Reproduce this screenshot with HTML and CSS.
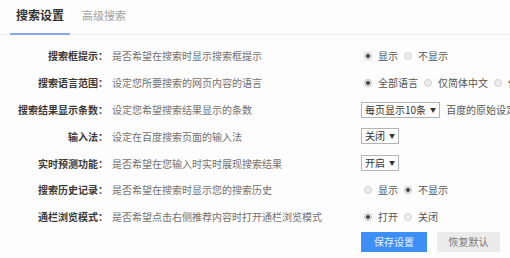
FILE: index.html
```html
<!DOCTYPE html>
<html lang="zh-CN">
<head>
<meta charset="utf-8">
<link rel="stylesheet" href="styles.css">
</head>
<body>
<div class="page">
  <div class="tabs">
    <div class="tab active">搜索设置</div>
    <div class="tab">高级搜索</div>
  </div>
  <div class="form">
    <div class="row">
      <div class="label">搜索框提示：</div>
      <div class="desc">是否希望在搜索时显示搜索框提示</div>
      <div class="ctrl">
        <span class="radio checked"></span><span class="opt">显示</span>
        <span class="radio"></span><span class="opt">不显示</span>
      </div>
    </div>
    <div class="row">
      <div class="label">搜索语言范围：</div>
      <div class="desc">设定您所要搜索的网页内容的语言</div>
      <div class="ctrl">
        <span class="radio checked"></span><span class="opt">全部语言</span>
        <span class="radio"></span><span class="opt">仅简体中文</span>
        <span class="radio"></span><span class="opt">仅繁体中文</span>
      </div>
    </div>
    <div class="row">
      <div class="label">搜索结果显示条数：</div>
      <div class="desc">设定您希望搜索结果显示的条数</div>
      <div class="ctrl">
        <span class="select">每页显示10条<span class="arrow">▼</span></span><span class="note">百度的原始设定10条且最有效率</span>
      </div>
    </div>
    <div class="row">
      <div class="label">输入法：</div>
      <div class="desc">设定在百度搜索页面的输入法</div>
      <div class="ctrl">
        <span class="select">关闭<span class="arrow">▼</span></span>
      </div>
    </div>
    <div class="row">
      <div class="label">实时预测功能：</div>
      <div class="desc">是否希望在您输入时实时展现搜索结果</div>
      <div class="ctrl">
        <span class="select">开启<span class="arrow">▼</span></span>
      </div>
    </div>
    <div class="row">
      <div class="label">搜索历史记录：</div>
      <div class="desc">是否希望在搜索时显示您的搜索历史</div>
      <div class="ctrl">
        <span class="radio"></span><span class="opt">显示</span>
        <span class="radio checked"></span><span class="opt">不显示</span>
      </div>
    </div>
    <div class="row">
      <div class="label">通栏浏览模式：</div>
      <div class="desc">是否希望点击右侧推荐内容时打开通栏浏览模式</div>
      <div class="ctrl">
        <span class="radio checked"></span><span class="opt">打开</span>
        <span class="radio"></span><span class="opt">关闭</span>
      </div>
    </div>
    <div class="buttons">
      <button class="btn primary">保存设置</button>
      <button class="btn">恢复默认</button>
    </div>
  </div>
</div>
</body>
</html>
```
FILE: styles.css
```css
html, body {
  margin: 0;
  padding: 0;
  background: #fdfdfd;
  overflow: hidden;
}
body {
  width: 510px;
  height: 258px;
  font-family: "Noto Sans CJK SC", "Liberation Sans", sans-serif;
  font-size: 10px;
  color: #333;
}
.page {
  width: 510px;
  overflow: hidden;
}
.tabs {
  display: flex;
  height: 35px;
  box-sizing: border-box;
  padding-left: 10px;
  border-bottom: 1px solid #eeeeee;
}
.tab {
  box-sizing: border-box;
  height: 35px;
  margin-bottom: -1px;
  padding: 0 6px;
  line-height: 30px;
  font-size: 11px;
  color: #a0a0a0;
  border-bottom: 2px solid transparent;
}
.tab + .tab {
  margin-left: 6px;
}
.tab.active {
  font-size: 12px;
  font-weight: bold;
  color: #333;
  border-bottom-color: #87a8e2;
}
.form {
  padding-top: 7.6px;
}
.row {
  display: flex;
  align-items: center;
  height: 26.8px;
  white-space: nowrap;
}
.label {
  width: 108px;
  flex: none;
  text-align: right;
  font-weight: bold;
  color: #3a3a3a;
}
.desc {
  width: 249px;
  flex: none;
  padding-left: 4px;
  color: #717171;
}
.ctrl {
  display: flex;
  align-items: center;
  flex: 1;
  min-width: 0;
  overflow: hidden;
  white-space: nowrap;
}
.radio {
  display: inline-block;
  flex: none;
  box-sizing: border-box;
  width: 8px;
  height: 8px;
  border-radius: 50%;
  border: 1px solid #d2d2d2;
  background: #ececec;
  margin: 0 6px 0 3px;
}
.radio.checked {
  border-color: #bdbdbd;
  background: radial-gradient(circle, #4a4a4a 0 1.6px, #e6e6e6 2.2px);
}
.opt {
  color: #555;
  margin-right: 3px;
}
.select {
  display: inline-flex;
  align-items: center;
  flex: none;
  box-sizing: border-box;
  height: 16px;
  padding: 0 3px 0 3px;
  border: 1px solid #b4b4b4;
  background: #fff;
  color: #333;
  line-height: 14px;
}
.arrow {
  font-size: 6px;
  margin-left: 4px;
  color: #333;
}
.note {
  margin-left: 6px;
  color: #555;
}
.buttons {
  display: flex;
  gap: 10px;
  padding-left: 361px;
  margin-top: 1.8px;
}
.btn {
  height: 20px;
  border: 0;
  padding: 0;
  font-family: inherit;
  font-size: 10px;
  color: #777;
  background: #ebebeb;
  width: 63px;
}
.btn.primary {
  width: 66px;
  background: #3d8ef5;
  color: #e8f1ff;
}
```
